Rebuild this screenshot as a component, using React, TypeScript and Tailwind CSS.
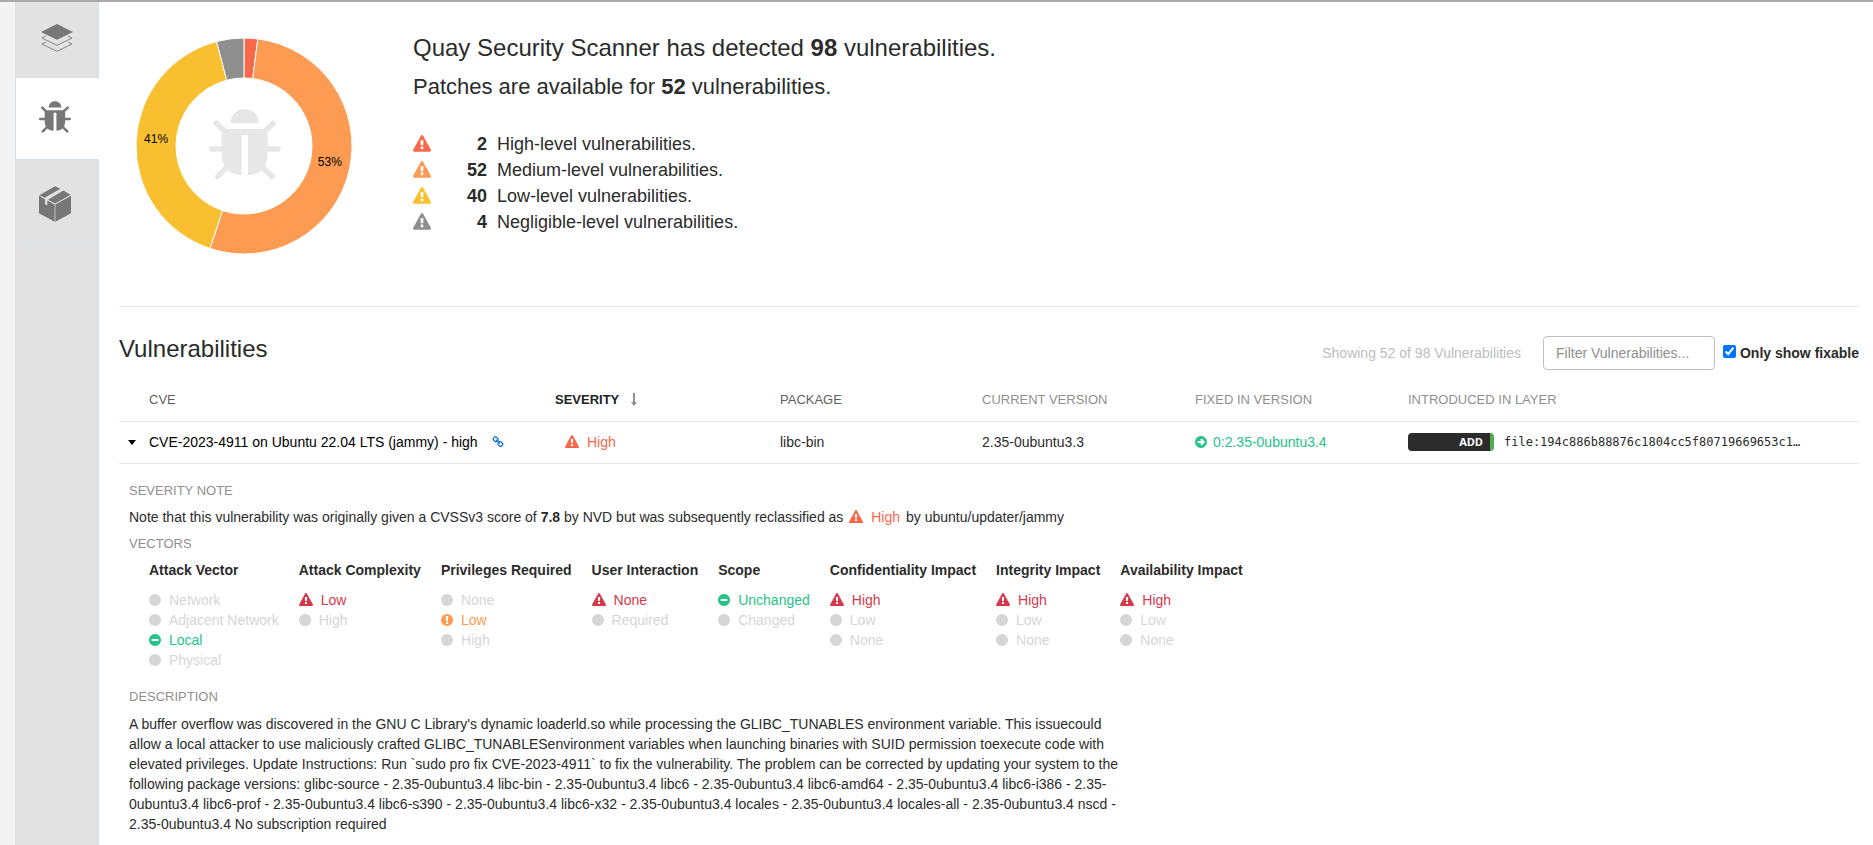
import React, { useState } from "react";

type IconProps = { className?: string };

const CIRCLE =
  "q0 209-103 385.5t-279.5 279.5-385.5 103-385.5-103-279.5-279.5-103-385.5 103-385.5 279.5-279.5 385.5-103 385.5 103 279.5 279.5 103 385.5z";

function Glyph({ d, className = "", viewBox = "0 0 1792 1792" }: IconProps & { d: string; viewBox?: string }) {
  return (
    <svg viewBox={viewBox} className={`shrink-0 fill-current ${className}`} aria-hidden="true">
      <path d={d} />
    </svg>
  );
}

const Warning = ({ className }: IconProps) => (
  <Glyph
    className={className}
    d="M1024 1375v-190q0-14-9.5-23.5t-22.5-9.5h-192q-13 0-22.5 9.5t-9.5 23.5v190q0 14 9.5 23.5t22.5 9.5h192q13 0 22.5-9.5t9.5-23.5zm-2-374l18-459q0-12-10-19-13-11-24-11h-220q-11 0-24 11-10 7-10 21l17 457q0 10 10 16.5t24 6.5h185q14 0 23.5-6.5t10.5-16.5zm-14-934l768 1408q35 63-2 126-17 29-46.5 46t-63.5 17h-1536q-34 0-63.5-17t-46.5-46q-37-63-2-126l768-1408q17-31 47-49t65-18 65 18 47 49z"
  />
);

const Dot = ({ className }: IconProps) => (
  <Glyph className={className} viewBox="128 128 1536 1536" d={`M1664 896${CIRCLE}`} />
);

const Minus = ({ className }: IconProps) => (
  <Glyph
    className={className}
    viewBox="128 128 1536 1536"
    d={`M1344 960v-128q0-26-19-45t-45-19h-768q-26 0-45 19t-19 45v128q0 26 19 45t45 19h768q26 0 45-19t19-45zm320-64${CIRCLE}`}
  />
);

const Exclaim = ({ className }: IconProps) => (
  <Glyph
    className={className}
    viewBox="128 128 1536 1536"
    d="M896 128q209 0 385.5 103t279.5 279.5 103 385.5-103 385.5-279.5 279.5-385.5 103-385.5-103-279.5-279.5-103-385.5 103-385.5 279.5-279.5 385.5-103zm128 1247v-190q0-14-9-23.5t-22-9.5h-192q-13 0-23 10t-10 23v190q0 13 10 23t23 10h192q13 0 22-9.5t9-23.5zm-2-344l18-621q0-12-10-18-10-8-24-8h-220q-14 0-24 8-10 6-10 18l17 621q0 10 10 17.5t24 7.5h185q14 0 23.5-7.5t10.5-17.5z"
  />
);

const ArrowCircle = ({ className }: IconProps) => (
  <Glyph
    className={className}
    viewBox="128 128 1536 1536"
    d={`M1413 896q0-27-18-45l-91-91-271-271q-18-18-45-18t-45 18l-91 91q-18 18-18 45t18 45l98 98h-438q-26 0-45 19t-19 45v128q0 26 19 45t45 19h438l-98 98q-18 18-18 45t18 45l91 91q18 18 45 18t45-18l271-271 91-91q18-18 18-45zm251 0${CIRCLE}`}
  />
);

const Chain = ({ className }: IconProps) => (
  <Glyph
    className={className}
    d="M1520 1216q0-40-28-68l-208-208q-28-28-68-28-42 0-72 32 3 3 19 18.5t21.5 21.5 15 19 13 25.5 3.5 27.5q0 40-28 68t-68 28q-15 0-27.5-3.5t-25.5-13-19-15-21.5-21.5-18.5-19q-33 31-33 73 0 40 28 68l206 207q27 27 68 27 40 0 68-26l147-146q28-28 28-67zm-703-705q0-40-28-68l-206-207q-28-28-68-28-39 0-68 27l-147 146q-28 28-28 67 0 40 28 68l208 208q27 27 68 27 42 0 72-31-3-3-19-18.5t-21.5-21.5-15-19-13-25.5-3.5-27.5q0-40 28-68t68-28q15 0 27.5 3.5t25.5 13 19 15 21.5 21.5 18.5 19q33-31 33-73zm895 705q0 120-85 203l-147 146q-83 83-203 83-121 0-204-85l-206-207q-83-83-83-203 0-123 88-209l-88-88q-86 88-208 88-120 0-204-84l-208-208q-84-84-84-204t85-203l147-146q83-83 203-83 121 0 204 85l206 207q83 83 83 203 0 123-88 209l88 88q86-88 208-88 120 0 204 84l208 208q84 84 84 204z"
  />
);

function BugShape() {
  return (
    <>
      <path d="M65 43C65 17 84 0 107 0s43 17 43 43z" />
      <path d="M38 60H176V130C176 172 158 198 117 198V78H98V198C58 198 38 172 38 130Z" />
      <path
        d="M40 120H8M175 120H207M46 66L22 43M168 66L193 43M52 176L26 203M162 176L190 203"
        fill="none"
        stroke="currentColor"
        strokeWidth="17"
        strokeLinecap="round"
      />
    </>
  );
}

function BugIcon({ className = "" }: IconProps) {
  return (
    <svg viewBox="0 0 215 212" className={`fill-current ${className}`} aria-hidden="true">
      <BugShape />
    </svg>
  );
}

function LayersIcon({ className = "" }: IconProps) {
  return (
    <svg viewBox="0 0 96 84" className={`fill-current ${className}`} aria-hidden="true">
      <path d="M48 0L96 24L48 47L0 24Z" />
      <path
        d="M15 36L3 42L48 64L93 42L81 36M15 54L3 60L48 82L93 60L81 54"
        fill="none"
        stroke="currentColor"
        strokeWidth="2.6"
      />
    </svg>
  );
}

function BoxIcon({ className = "" }: IconProps) {
  return (
    <svg viewBox="0 0 96 107" className={`fill-current ${className}`} aria-hidden="true">
      <path d="M48 0L64 8L17 35L1 27Z" />
      <path d="M73 13L95 26L48 52L27 41Z" />
      <path d="M0 29L18 39V54L25 57V43L47 55V107L0 81Z" />
      <path d="M96 29L49 55V107L96 81Z" />
    </svg>
  );
}

const SEVERITIES = [
  { level: "High", count: 2, text: "text-[#f9684b]", fill: "fill-[#f9684b]" },
  { level: "Medium", count: 52, text: "text-[#fd9b52]", fill: "fill-[#fd9b52]" },
  { level: "Low", count: 40, text: "text-[#f8c030]", fill: "fill-[#f8c030]" },
  { level: "Negligible", count: 4, text: "text-[#8f8f8f]", fill: "fill-[#8f8f8f]" },
];

function Donut() {
  const total = SEVERITIES.reduce((sum, s) => sum + s.count, 0);
  const point = (r: number, turn: number) => {
    const a = turn * 2 * Math.PI;
    return `${(108 + r * Math.sin(a)).toFixed(2)} ${(108 - r * Math.cos(a)).toFixed(2)}`;
  };
  let seen = 0;
  return (
    <svg viewBox="0 0 216 216" className="size-[216px] shrink-0" role="img" aria-label="Vulnerabilities by severity">
      {SEVERITIES.map((s) => {
        const from = seen / total;
        seen += s.count;
        const to = seen / total;
        const share = Math.round((s.count / total) * 100);
        const large = to - from > 0.5 ? 1 : 0;
        const mid = ((from + to) / 2) * 2 * Math.PI;
        return (
          <g key={s.level}>
            <path
              className={`stroke-white ${s.fill}`}
              d={`M${point(108, from)}A108 108 0 ${large} 1 ${point(108, to)}L${point(68, to)}A68 68 0 ${large} 0 ${point(68, from)}Z`}
            />
            {share > 10 && (
              <text
                x={108 + 88 * Math.sin(mid)}
                y={108 - 88 * Math.cos(mid)}
                textAnchor="middle"
                className="fill-black text-xs"
              >
                {share}%
              </text>
            )}
          </g>
        );
      })}
      <g className="text-[#e7e7e7]" fill="currentColor" transform="translate(73 71) scale(.333)">
        <BugShape />
      </g>
    </svg>
  );
}

type Option = { label: string; kind?: "high" | "medium" | "low" };

const VECTORS: { title: string; options: Option[] }[] = [
  {
    title: "Attack Vector",
    options: [{ label: "Network" }, { label: "Adjacent Network" }, { label: "Local", kind: "low" }, { label: "Physical" }],
  },
  { title: "Attack Complexity", options: [{ label: "Low", kind: "high" }, { label: "High" }] },
  { title: "Privileges Required", options: [{ label: "None" }, { label: "Low", kind: "medium" }, { label: "High" }] },
  { title: "User Interaction", options: [{ label: "None", kind: "high" }, { label: "Required" }] },
  { title: "Scope", options: [{ label: "Unchanged", kind: "low" }, { label: "Changed" }] },
  { title: "Confidentiality Impact", options: [{ label: "High", kind: "high" }, { label: "Low" }, { label: "None" }] },
  { title: "Integrity Impact", options: [{ label: "High", kind: "high" }, { label: "Low" }, { label: "None" }] },
  { title: "Availability Impact", options: [{ label: "High", kind: "high" }, { label: "Low" }, { label: "None" }] },
];

function VectorOption({ label, kind }: Option) {
  if (kind === "high")
    return (
      <li className="flex items-center gap-2 text-[#d5394b]">
        <Warning className="size-3.5" />
        {label}
      </li>
    );
  if (kind === "medium")
    return (
      <li className="flex items-center gap-2 text-[#fd9b52]">
        <Exclaim className="size-3" />
        {label}
      </li>
    );
  if (kind === "low")
    return (
      <li className="flex items-center gap-2 text-[#27c389]">
        <Minus className="size-3" />
        {label}
      </li>
    );
  return (
    <li className="flex items-center gap-2 text-[#d6d6d6]">
      <Dot className="size-3" />
      {label}
    </li>
  );
}

function Sidebar() {
  return (
    <nav className="flex w-[84px] shrink-0 flex-col bg-[#e2e2e2]" aria-label="Manifest">
      <button
        aria-label="Layers"
        className="flex h-[75px] items-center justify-center border-r border-[#d3e2ea] pb-1 text-[#777]"
      >
        <LayersIcon className="h-7 w-8" />
      </button>
      <button
        aria-label="Security scan"
        className="flex h-[83px] items-center justify-center border-y border-l border-[#d3e2ea] bg-white pr-1.5 pb-1 text-[#777]"
      >
        <BugIcon className="size-8" />
      </button>
      <button
        aria-label="Packages"
        className="flex h-[84px] items-center justify-center border-r border-b border-r-[#d3e2ea] border-b-[#dae3e8] pt-1 pr-1 text-[#777]"
      >
        <BoxIcon className="h-9 w-8" />
      </button>
      <div className="grow border-r border-[#d3e2ea]" />
    </nav>
  );
}

const DESCRIPTION =
  "A buffer overflow was discovered in the GNU C Library's dynamic loaderld.so while processing the GLIBC_TUNABLES environment variable. This issuecould allow a local attacker to use maliciously crafted GLIBC_TUNABLESenvironment variables when launching binaries with SUID permission toexecute code with elevated privileges. Update Instructions: Run `sudo pro fix CVE-2023-4911` to fix the vulnerability. The problem can be corrected by updating your system to the following package versions: glibc-source - 2.35-0ubuntu3.4 libc-bin - 2.35-0ubuntu3.4 libc6 - 2.35-0ubuntu3.4 libc6-amd64 - 2.35-0ubuntu3.4 libc6-i386 - 2.35-0ubuntu3.4 libc6-prof - 2.35-0ubuntu3.4 libc6-s390 - 2.35-0ubuntu3.4 libc6-x32 - 2.35-0ubuntu3.4 locales - 2.35-0ubuntu3.4 locales-all - 2.35-0ubuntu3.4 nscd - 2.35-0ubuntu3.4 No subscription required";

function Details() {
  return (
    <div className="pt-[17px] pl-2.5">
      <h4 className="text-[13px] leading-5 text-[#8f8f8f]">SEVERITY NOTE</h4>
      <p className="mt-1.5 flex items-center whitespace-pre">
        Note that this vulnerability was originally given a CVSSv3 score of <b>7.8</b> by NVD but was subsequently
        reclassified as{" "}
        <span className="mr-1.5 ml-0.5 flex items-center gap-2 text-[#f9684b]">
          <Warning className="size-3.5" />
          High
        </span>
        by ubuntu/updater/jammy
      </p>
      <h4 className="mt-[7px] text-[13px] leading-5 text-[#8f8f8f]">VECTORS</h4>
      <div className="mt-1.5 flex gap-5 pl-5">
        {VECTORS.map((v) => (
          <div key={v.title}>
            <h5 className="mb-2.5 font-bold">{v.title}</h5>
            <ul>
              {v.options.map((o) => (
                <VectorOption key={o.label} {...o} />
              ))}
            </ul>
          </div>
        ))}
      </div>
      <h4 className="mt-[17px] text-[13px] leading-5 text-[#8f8f8f]">DESCRIPTION</h4>
      <p className="mt-[7px] max-w-[1000px]">{DESCRIPTION}</p>
    </div>
  );
}

export default function App() {
  const [fixable, setFixable] = useState(true);
  const [filter, setFilter] = useState("");
  const [open, setOpen] = useState(true);

  return (
    <div className="flex min-h-screen flex-col border-t-2 border-[#a9a9a9] bg-[#f3f3f3] pl-[15px] font-['Liberation_Sans',Arial,sans-serif] text-sm leading-5 text-[#2b2b2b]">
      <div className="flex grow">
        <Sidebar />
        <main className="min-w-0 grow bg-white pr-3.5 pl-5">
          <section className="flex gap-[61px] border-b border-[#e8e8e8] pt-9 pb-[52px] pl-[17px]">
            <Donut />
            <div>
              <h1 className="-mt-1 text-2xl leading-7">
                Quay Security Scanner has detected <b>98</b> vulnerabilities.
              </h1>
              <h2 className="mt-[13px] text-[22px] leading-6">
                Patches are available for <b>52</b> vulnerabilities.
              </h2>
              <ul className="mt-8 text-lg leading-[26px]">
                {SEVERITIES.map((s) => (
                  <li key={s.level} className="flex items-center">
                    <Warning className={`size-[18px] ${s.text}`} />
                    <b className="w-14 text-right">{s.count}</b>
                    <span className="ml-2.5">{s.level}-level vulnerabilities.</span>
                  </li>
                ))}
              </ul>
            </div>
          </section>

          <header className="flex items-center pt-7">
            <h2 className="mb-2 text-2xl leading-7">Vulnerabilities</h2>
            <span className="ml-auto text-[#bdbdbd]">Showing 52 of 98 Vulnerabilities</span>
            <input
              aria-label="Filter vulnerabilities"
              placeholder="Filter Vulnerabilities..."
              value={filter}
              onChange={(e) => setFilter(e.target.value)}
              className="ml-[22px] h-[34px] w-[172px] rounded-sm border border-[#bfbfbf] px-3 placeholder:text-[#8f8f8f]"
            />
            <label className="ml-2 flex items-center gap-1 font-bold">
              <input
                type="checkbox"
                checked={fixable}
                onChange={(e) => setFixable(e.target.checked)}
                className="mb-1 size-[13px] accent-[#0075ff]"
              />
              Only show fixable
            </label>
          </header>

          <table className="w-full table-fixed border-collapse">
            <thead>
              <tr className="h-[50px] border-b border-[#e8e8e8] text-left text-[13px] text-[#8f8f8f]">
                <th className="w-[30px]" aria-label="Expand" />
                <th className="w-[406px] pt-2 font-normal text-[#5f5f5f]">CVE</th>
                <th className="w-[225px] pt-2 font-bold text-[#222]">
                  <span className="flex items-center gap-3">
                    SEVERITY
                    <svg viewBox="0 0 6 13" className="h-[13px] w-1.5 fill-[#8f8f8f]" aria-hidden="true">
                      <path d="M2 0H4V9H6L3 13L0 9H2Z" />
                    </svg>
                  </span>
                </th>
                <th className="w-[202px] pt-2 font-normal text-[#5f5f5f]">PACKAGE</th>
                <th className="w-[213px] pt-2 font-normal">CURRENT VERSION</th>
                <th className="w-[213px] pt-2 font-normal">FIXED IN VERSION</th>
                <th className="pt-2 font-normal">INTRODUCED IN LAYER</th>
              </tr>
            </thead>
            <tbody>
              <tr className="h-[42px] border-b border-[#e8e8e8]">
                <td>
                  <button
                    aria-label="Toggle details"
                    aria-expanded={open}
                    onClick={() => setOpen(!open)}
                    className="flex size-5 items-center justify-center pl-1.5"
                  >
                    <svg viewBox="0 0 8 5" className="h-[5px] w-2 fill-black" aria-hidden="true">
                      <path d="M0 0H8L4 5Z" />
                    </svg>
                  </button>
                </td>
                <td className="text-black">
                  <span className="flex items-center gap-3.5">
                    CVE-2023-4911 on Ubuntu 22.04 LTS (jammy) - high
                    <a href="#cve" aria-label="Advisory link" className="text-[#1270c8]">
                      <Chain className="size-3" />
                    </a>
                  </span>
                </td>
                <td>
                  <span className="flex items-center gap-2 pl-2.5 text-[#f9684b]">
                    <Warning className="size-3.5" />
                    High
                  </span>
                </td>
                <td>libc-bin</td>
                <td>2.35-0ubuntu3.3</td>
                <td>
                  <span className="flex items-center gap-1.5 text-[#27c389]">
                    <ArrowCircle className="size-3" />
                    0:2.35-0ubuntu3.4
                  </span>
                </td>
                <td>
                  <span className="flex items-center gap-2.5">
                    <span className="h-[18px] w-[86px] rounded-sm border-r-4 border-[#4caf50] bg-[#2b2b2b] pr-[7px] text-right font-['Open_Sans',sans-serif] text-[11px] leading-[18px] font-bold text-white">
                      ADD
                    </span>
                    <code className="font-['DejaVu_Sans_Mono',monospace] text-xs leading-5">
                      file:194c886b88876c1804cc5f80719669653c1…
                    </code>
                  </span>
                </td>
              </tr>
              {open && (
                <tr>
                  <td colSpan={7} className="align-top">
                    <Details />
                  </td>
                </tr>
              )}
            </tbody>
          </table>
        </main>
      </div>
    </div>
  );
}
